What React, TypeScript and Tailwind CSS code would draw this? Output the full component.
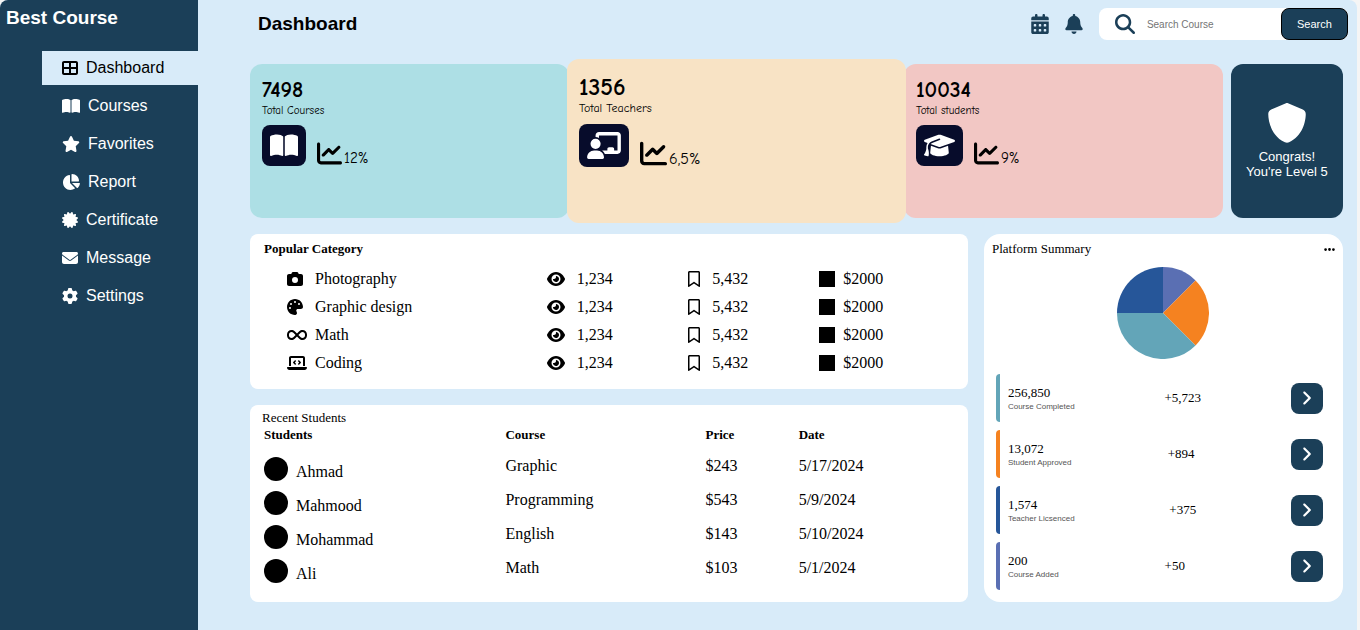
import type { IconType } from "react-icons";
import {
  FaAngleRight,
  FaBell,
  FaBookOpen,
  FaCalendarDays,
  FaCamera,
  FaCertificate,
  FaChalkboardUser,
  FaChartLine,
  FaChartPie,
  FaEllipsis,
  FaEnvelope,
  FaEye,
  FaGear,
  FaGraduationCap,
  FaInfinity,
  FaLaptopCode,
  FaMagnifyingGlass,
  FaPalette,
  FaRegBookmark,
  FaShield,
  FaStar,
  FaTableCellsLarge,
} from "react-icons/fa6";

const navItems: { label: string; Icon: IconType; size: string; active?: boolean }[] = [
  { label: "Dashboard", Icon: FaTableCellsLarge, size: "h-4 w-4", active: true },
  { label: "Courses", Icon: FaBookOpen, size: "h-4 w-[18px]" },
  { label: "Favorites", Icon: FaStar, size: "h-4 w-[18px]" },
  { label: "Report", Icon: FaChartPie, size: "h-4 w-[18px]" },
  { label: "Certificate", Icon: FaCertificate, size: "h-4 w-4" },
  { label: "Message", Icon: FaEnvelope, size: "h-4 w-4" },
  { label: "Settings", Icon: FaGear, size: "h-4 w-4" },
];

const categories: { name: string; Icon: IconType; size: string }[] = [
  { name: "Photography", Icon: FaCamera, size: "h-4 w-4" },
  { name: "Graphic design", Icon: FaPalette, size: "h-4 w-4" },
  { name: "Math", Icon: FaInfinity, size: "h-4 w-5" },
  { name: "Coding", Icon: FaLaptopCode, size: "h-4 w-5" },
];

const students = [
  { name: "Ahmad", course: "Graphic", price: "$243", date: "5/17/2024" },
  { name: "Mahmood", course: "Programming", price: "$543", date: "5/9/2024" },
  { name: "Mohammad", course: "English", price: "$143", date: "5/10/2024" },
  { name: "Ali", course: "Math", price: "$103", date: "5/1/2024" },
];

const summary = [
  { value: "256,850", label: "Course Completed", delta: "+5,723", border: "border-[#63a5b8]" },
  { value: "13,072", label: "Student Approved", delta: "+894", border: "border-[#f58220]" },
  { value: "1,574", label: "Teacher Licsenced", delta: "+375", border: "border-[#265699]" },
  { value: "200", label: "Course Added", delta: "+50", border: "border-[#5a6fb3]" },
];

function Sidebar() {
  return (
    <aside className="w-[198px] shrink-0 bg-[#1b3f58] text-white">
      <h1 className="pt-1 pl-1.5 text-[19px] leading-7 font-bold">Best Course</h1>
      <nav className="mt-[19px] pl-[42px]">
        <ul className="flex flex-col gap-1">
          {navItems.map(({ label, Icon, size, active }) => (
            <li key={label}>
              <a
                href="#"
                className={
                  active
                    ? "flex h-[34px] items-center gap-2 bg-[#d8ebf9] pl-5 text-base text-black"
                    : "flex h-[34px] items-center gap-2 pl-5 text-base text-white"
                }
              >
                <Icon className={size} />
                {label}
              </a>
            </li>
          ))}
        </ul>
      </nav>
    </aside>
  );
}

function Header() {
  return (
    <header className="flex items-center justify-between pt-2 pr-[9px] pl-[60px]">
      <h2 className="text-[19px] leading-7 font-bold">Dashboard</h2>
      <div className="flex items-center text-[#1b3f58]">
        <button type="button" aria-label="Calendar" className="mr-4">
          <FaCalendarDays className="h-5 w-[18px]" />
        </button>
        <button type="button" aria-label="Notifications" className="mr-4">
          <FaBell className="h-5 w-[18px]" />
        </button>
        <form className="flex h-8 items-center rounded-lg bg-white pl-4" onSubmit={(e) => e.preventDefault()}>
          <label htmlFor="search" aria-label="Search Course">
            <FaMagnifyingGlass className="h-5 w-5" />
          </label>
          <input
            id="search"
            type="search"
            placeholder="Search Course"
            className="ml-3 w-[134px] text-[10px] text-black outline-none placeholder:text-[#757575]"
          />
          <button
            type="submit"
            className="h-8 w-[67px] rounded-lg border border-black bg-[#1b3f58] text-[11px] text-white"
          >
            Search
          </button>
        </form>
      </div>
    </header>
  );
}

function StatCards() {
  return (
    <section className="grid h-[154px] grow grid-cols-3 gap-2 font-['Comic_Sans_MS','Comic_Neue','Noto_Sans',sans-serif]">
      <article className="rounded-xl bg-[#addfe5] px-3 pt-3.5">
        <p className="text-[22px] leading-6 font-bold">7498</p>
        <p className="text-[11px] leading-[18px]">Total Courses</p>
        <div className="mt-[5px] flex items-end gap-[11px]">
          <span className="rounded-lg bg-[#070c2b] p-2 text-white">
            <FaBookOpen className="h-[25px] w-7" />
          </span>
          <span className="flex items-end gap-0.5 text-[15px] leading-4">
            <FaChartLine className="size-[25px]" />
            12%
          </span>
        </div>
      </article>
      <article className="relative z-10 -mx-[10px] -my-[5px] rounded-xl bg-[#f8e3c5] px-3 pt-4">
        <p className="text-2xl leading-6 font-bold">1356</p>
        <p className="text-xs leading-[18px]">Total Teachers</p>
        <div className="mt-[7px] flex items-end gap-[11px]">
          <span className="rounded-lg bg-[#070c2b] p-2 text-white">
            <FaChalkboardUser className="h-[27px] w-[34px]" />
          </span>
          <span className="flex items-end gap-0.5 text-base leading-4">
            <FaChartLine className="size-[27px]" />
            6,5%
          </span>
        </div>
      </article>
      <article className="rounded-xl bg-[#f2c7c4] px-3 pt-3.5">
        <p className="text-[22px] leading-6 font-bold">10034</p>
        <p className="text-[11px] leading-[18px]">Total students</p>
        <div className="mt-[5px] flex items-end gap-[11px]">
          <span className="rounded-lg bg-[#070c2b] p-2 text-white">
            <FaGraduationCap className="h-[25px] w-[31px]" />
          </span>
          <span className="flex items-end gap-0.5 text-[15px] leading-4">
            <FaChartLine className="size-[25px]" />
            9%
          </span>
        </div>
      </article>
    </section>
  );
}

function LevelCard() {
  return (
    <section className="flex w-28 shrink-0 flex-col items-center justify-center rounded-xl bg-[#1b3f58] text-center text-[13px] leading-[15px] text-white">
      <FaShield className="mb-1.5 size-10" />
      <p>Congrats!</p>
      <p>You're Level 5</p>
    </section>
  );
}

function PopularCategory() {
  return (
    <section className="rounded-lg bg-white px-3.5 pt-1.5 pb-3">
      <table className="w-full table-fixed border-collapse text-left text-base leading-5">
        <colgroup>
          <col className="w-[41%]" />
          <col className="w-[20.5%]" />
          <col className="w-[19%]" />
          <col />
        </colgroup>
        <thead>
          <tr className="h-[25px]">
            <th colSpan={4} className="pt-0 align-top text-[13px] leading-[18px]">
              Popular Category
            </th>
          </tr>
        </thead>
        <tbody>
          {categories.map(({ name, Icon, size }) => (
            <tr key={name} className="h-7">
              <td>
                <div className="flex items-center pl-[23px]">
                  <span className="w-7">
                    <Icon className={size} />
                  </span>
                  {name}
                </div>
              </td>
              <td>
                <div className="flex items-center gap-3">
                  <FaEye className="h-4 w-[18px]" />
                  1,234
                </div>
              </td>
              <td>
                <div className="flex items-center gap-3">
                  <FaRegBookmark className="h-4 w-3" />
                  5,432
                </div>
              </td>
              <td>
                <div className="flex items-center gap-2">
                  <span className="size-4 bg-black" />
                  $2000
                </div>
              </td>
            </tr>
          ))}
        </tbody>
      </table>
    </section>
  );
}

function RecentStudents() {
  return (
    <section className="grow rounded-lg bg-white px-3.5 pt-1 pb-2">
      <table className="w-full table-fixed border-collapse text-left text-base leading-[18px]">
        <caption className="-ml-0.5 text-left text-[13px]">Recent Students</caption>
        <colgroup>
          <col className="w-[35%]" />
          <col className="w-[29%]" />
          <col className="w-[13.5%]" />
          <col />
        </colgroup>
        <thead>
          <tr className="h-[30px] align-top text-[13px] leading-4">
            <th>Students</th>
            <th>Course</th>
            <th>Price</th>
            <th>Date</th>
          </tr>
        </thead>
        <tbody>
          {students.map((s) => (
            <tr key={s.name} className="h-[34px] align-top">
              <td>
                <div className="flex items-end gap-2">
                  <span className="size-6 rounded-full bg-black" />
                  {s.name}
                </div>
              </td>
              <td>{s.course}</td>
              <td>{s.price}</td>
              <td>{s.date}</td>
            </tr>
          ))}
        </tbody>
      </table>
    </section>
  );
}

function PlatformSummary() {
  return (
    <section className="rounded-2xl bg-white px-2 pt-1.5 pb-3">
      <div className="flex items-center justify-between">
        <h3 className="text-[13px] leading-[18px]">Platform Summary</h3>
        <button type="button" aria-label="More options">
          <FaEllipsis className="h-[13px] w-[11px]" />
        </button>
      </div>
      <svg viewBox="-46 -46 92 92" className="mx-auto mt-[9px] size-[92px]" role="img" aria-label="Course distribution">
        <path d="M0 0V-46A46 46 0 0 1 32.53 -32.53Z" fill="#5a6fb3" />
        <path d="M0 0L32.53 -32.53A46 46 0 0 1 32.53 32.53Z" fill="#f58220" />
        <path d="M0 0L32.53 32.53A46 46 0 0 1 -46 0Z" fill="#63a5b8" />
        <path d="M0 0H-46A46 46 0 0 1 0 -46Z" fill="#265699" />
      </svg>
      <ul className="mt-[15px] flex flex-col gap-2 pr-3 pl-1">
        {summary.map((row) => (
          <li
            key={row.label}
            className={`flex h-12 items-center justify-between rounded-l-sm border-l-4 pl-2 text-[13px] ${row.border}`}
          >
            <div>
              <p className="leading-4">{row.value}</p>
              <p className="font-[Liberation_Sans,sans-serif] text-[8px] leading-[11px] text-[#555555]">{row.label}</p>
            </div>
            <span>{row.delta}</span>
            <button
              type="button"
              aria-label={`Open ${row.label}`}
              className="flex h-[31px] w-8 items-center justify-center rounded-lg bg-[#1b3f58] text-white"
            >
              <FaAngleRight className="h-[18px] w-[11px]" />
            </button>
          </li>
        ))}
      </ul>
    </section>
  );
}

export default function App() {
  return (
    <div className="min-h-screen bg-[#f5f5f5] pr-[3px] font-['Liberation_Sans',Arial,sans-serif] text-black">
      <div className="flex min-h-screen overflow-hidden rounded-t-lg bg-[#d8ebf9]">
        <Sidebar />
        <main className="min-w-0 grow">
          <Header />
          <div className="flex flex-col gap-4 pt-6 pr-3.5 pb-7 pl-[52px]">
            <div className="flex gap-2">
              <StatCards />
              <LevelCard />
            </div>
            <div className="grid grid-cols-[2fr_1fr] gap-4 font-['Liberation_Serif','Times_New_Roman',serif]">
              <div className="flex flex-col gap-4">
                <PopularCategory />
                <RecentStudents />
              </div>
              <PlatformSummary />
            </div>
          </div>
        </main>
      </div>
    </div>
  );
}
